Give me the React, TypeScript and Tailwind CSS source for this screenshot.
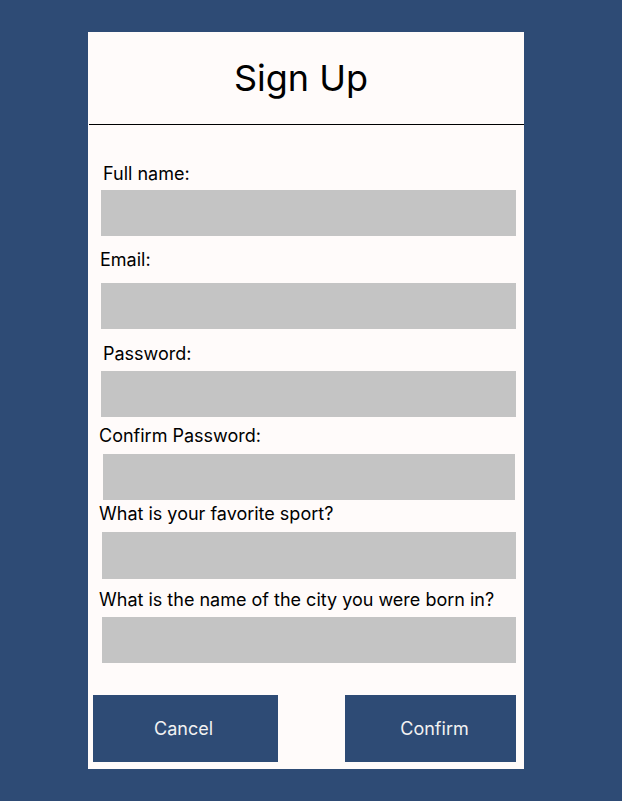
const fields = [
    { label: "Full name:", labelClass: "mt-[38px] ml-[15px]", inputClass: "mt-[5px] ml-[13px] w-[415px] h-[46px]" },
    { label: "Email:", labelClass: "mt-[13px] ml-[12px]", inputClass: "mt-[12px] ml-[13px] w-[415px] h-[46px]" },
    { label: "Password:", labelClass: "mt-[14px] ml-[15px]", inputClass: "mt-[6px] ml-[13px] w-[415px] h-[46px]" },
    { label: "Confirm Password:", labelClass: "mt-[8px] ml-[11px]", inputClass: "mt-[7px] ml-[15px] w-[412px] h-[46px]" },
    { label: "What is your favorite sport?", labelClass: "mt-[3px] ml-[11px]", inputClass: "mt-[7px] ml-[14px] w-[414px] h-[47px]" },
    { label: "What is the name of the city you were born in?", labelClass: "mt-[10px] ml-[11px]", inputClass: "mt-[6px] ml-[14px] w-[414px] h-[46px]" },
];

export default function App() {
    return (
        <div className="min-h-[801px] w-full bg-[#2e4b75] pt-[32px] pb-[32px] font-['Inter',sans-serif]">
            <div className="ml-[88px] w-[436px] bg-[#fffbfa] flex flex-col pb-[7px]">
                {/* Header */}
                <div className="h-[92px] flex items-center justify-center pr-[10px]">
                    <h1 className="text-[36px] leading-[44px] text-black">Sign Up</h1>
                </div>
                <div className="h-px bg-black ml-px" />

                {/* Fields */}
                {fields.map((f) => (
                    <div key={f.label} className="flex flex-col">
                        <label className={`text-[18px] leading-[22px] text-black ${f.labelClass}`}>
                            {f.label}
                        </label>
                        <input
                            type="text"
                            className={`block bg-[#c4c4c4] outline-none ${f.inputClass}`}
                        />
                    </div>
                ))}

                {/* Buttons */}
                <div className="mt-[32px] flex items-start">
                    <button className="ml-[5px] w-[185px] h-[67px] bg-[#2e4b75] text-[#f2f2f2] text-[18px] pr-[4px]">
                        Cancel
                    </button>
                    <button className="ml-[67px] w-[171px] h-[67px] bg-[#2e4b75] text-[#f2f2f2] text-[18px] pl-[8px]">
                        Confirm
                    </button>
                </div>
            </div>
        </div>
    );
}
